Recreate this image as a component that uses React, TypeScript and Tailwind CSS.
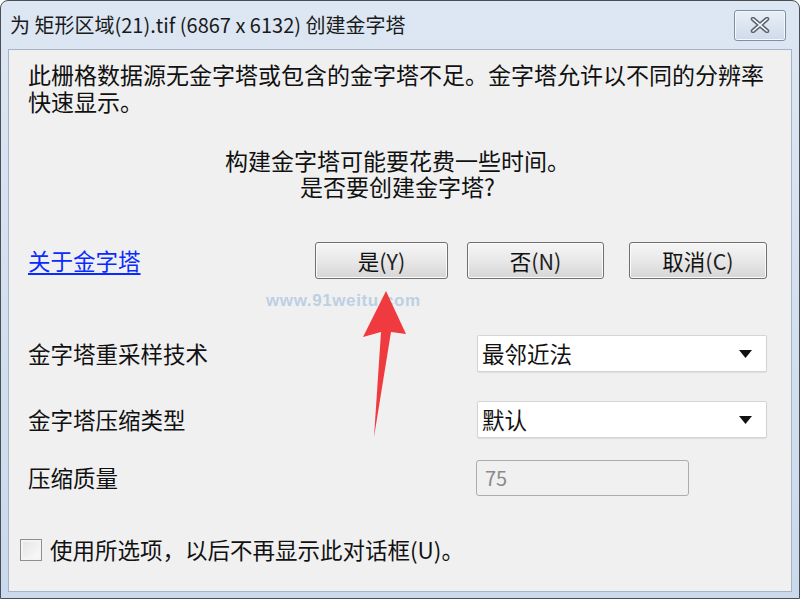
const cjk = { fontFamily: '"Noto Sans CJK SC", "Noto Sans", sans-serif' };

function DialogButton({ label, hotkey, className }: { label: string; hotkey: string; className: string }) {
  return (
    <button
      className={`h-[37px] rounded-[3px] border border-[#707070] bg-gradient-to-b from-[#f6f6f6] via-[#e8e8e8] to-[#d6d6d6] text-[21.5px] text-[#111] leading-none shadow-[inset_0_0_0_1px_#fbfbfb] ${className}`}
    >
      {label}
      <span className="text-[#222]">({hotkey})</span>
    </button>
  );
}

function Select({ value }: { value: string }) {
  return (
    <div className="flex h-[37px] w-[290px] items-center justify-between rounded-[2px] border border-[#d4d4d4] bg-white pl-[4px] pr-[14px] shadow-[0_1px_1px_rgba(0,0,0,0.08)]">
      <span className="text-[22.5px] text-[#111]">{value}</span>
      <svg width="13" height="8" viewBox="0 0 13 8">
        <path d="M0 0 H13 L6.5 8 Z" fill="#111" />
      </svg>
    </div>
  );
}

export default function App() {
  return (
    <div
      className="relative flex h-[599px] w-[800px] flex-col overflow-hidden rounded-t-[8px] border border-[#4a4e55] bg-gradient-to-b from-[#dde7f3] to-[#cad9eb]"
      style={cjk}
    >
      {/* title bar */}
      <div className="flex h-[48px] shrink-0 items-center justify-between pl-[9px] pr-[13px]">
        <span className="text-[20px] text-[#1a1a1a]">为 矩形区域(21).tif (6867 x 6132) 创建金字塔</span>
        <div className="flex h-[31px] w-[52px] items-center justify-center rounded-[3px] border border-[#7e8fa5] bg-gradient-to-b from-[#e9eff7] to-[#cfdbea] shadow-[inset_0_0_0_1px_#f4f7fb]">
          <svg width="20" height="16" viewBox="0 0 20 16">
            <path d="M3 2 L17 14 M17 2 L3 14" stroke="#5a6270" strokeWidth="4.5" strokeLinecap="round" />
            <path d="M3 2 L17 14 M17 2 L3 14" stroke="#f4f6f9" strokeWidth="1.6" strokeLinecap="round" />
          </svg>
        </div>
      </div>

      {/* client area */}
      <div className="mx-[7px] mb-[6px] flex flex-1 flex-col border border-[#a4b3c6] bg-[#f0f0f0] pl-[19px] pr-[24px] text-[#111]">
        <div className="mt-[11px] whitespace-nowrap text-[23px]">
          <div className="h-[27px] leading-[27px]">此栅格数据源无金字塔或包含的金字塔不足。金字塔允许以不同的分辨率</div>
          <div className="h-[27px] leading-[27px]">快速显示。</div>
        </div>

        <div className="mt-[32px] text-center text-[23px]">
          <div className="h-[26px] leading-[26px]">构建金字塔可能要花费一些时间。</div>
          <div className="h-[26px] leading-[26px]">是否要创建金字塔?</div>
        </div>

        <div className="mt-[43px] flex items-center">
          <a className="w-[287px] text-[22.5px] text-[#0a2bff] underline underline-offset-[3px]">关于金字塔</a>
          <DialogButton label="是" hotkey="Y" className="w-[133px]" />
          <DialogButton label="否" hotkey="N" className="ml-[19px] w-[137px]" />
          <DialogButton label="取消" hotkey="C" className="ml-[25px] w-[138px]" />
        </div>

        <div className="mt-[56px] flex items-center justify-between">
          <span className="text-[22.5px]">金字塔重采样技术</span>
          <Select value="最邻近法" />
        </div>

        <div className="mt-[29px] flex items-center justify-between">
          <span className="text-[22.5px]">金字塔压缩类型</span>
          <Select value="默认" />
        </div>

        <div className="mt-[22px] flex items-center">
          <span className="w-[448px] text-[22.5px]">压缩质量</span>
          <div className="flex h-[36px] w-[213px] items-center rounded-[3px] border border-[#acacac] bg-[#f0f0f0] pl-[8px] text-[20px] text-[#8a8a8a]">
            75
          </div>
        </div>

        <div className="mt-[37px] flex items-center">
          <div className="-ml-[8px] h-[22px] w-[22px] border border-[#8e8f8f] bg-gradient-to-br from-[#e4e4e4] to-[#fbfbfb] shadow-[inset_0_0_0_2px_#f4f4f4]" />
          <span className="ml-[8px] text-[22.5px]">使用所选项，以后不再显示此对话框(U)。</span>
        </div>
      </div>

      {/* watermark */}
      <span
        className="pointer-events-none absolute left-[265px] top-[287px] text-[17px] font-bold tracking-[0.6px] text-[#bcd0e4]"
        style={{ fontFamily: '"Liberation Sans", Arial, sans-serif' }}
      >
        www.91weitu.com
      </span>

      {/* red annotation arrow */}
      <svg className="pointer-events-none absolute left-0 top-0" width="800" height="599" viewBox="0 0 800 599">
        <polygon points="385,290 405,333 390,331 373,436 380,331 362,336" fill="#ef3b3f" />
      </svg>
    </div>
  );
}
